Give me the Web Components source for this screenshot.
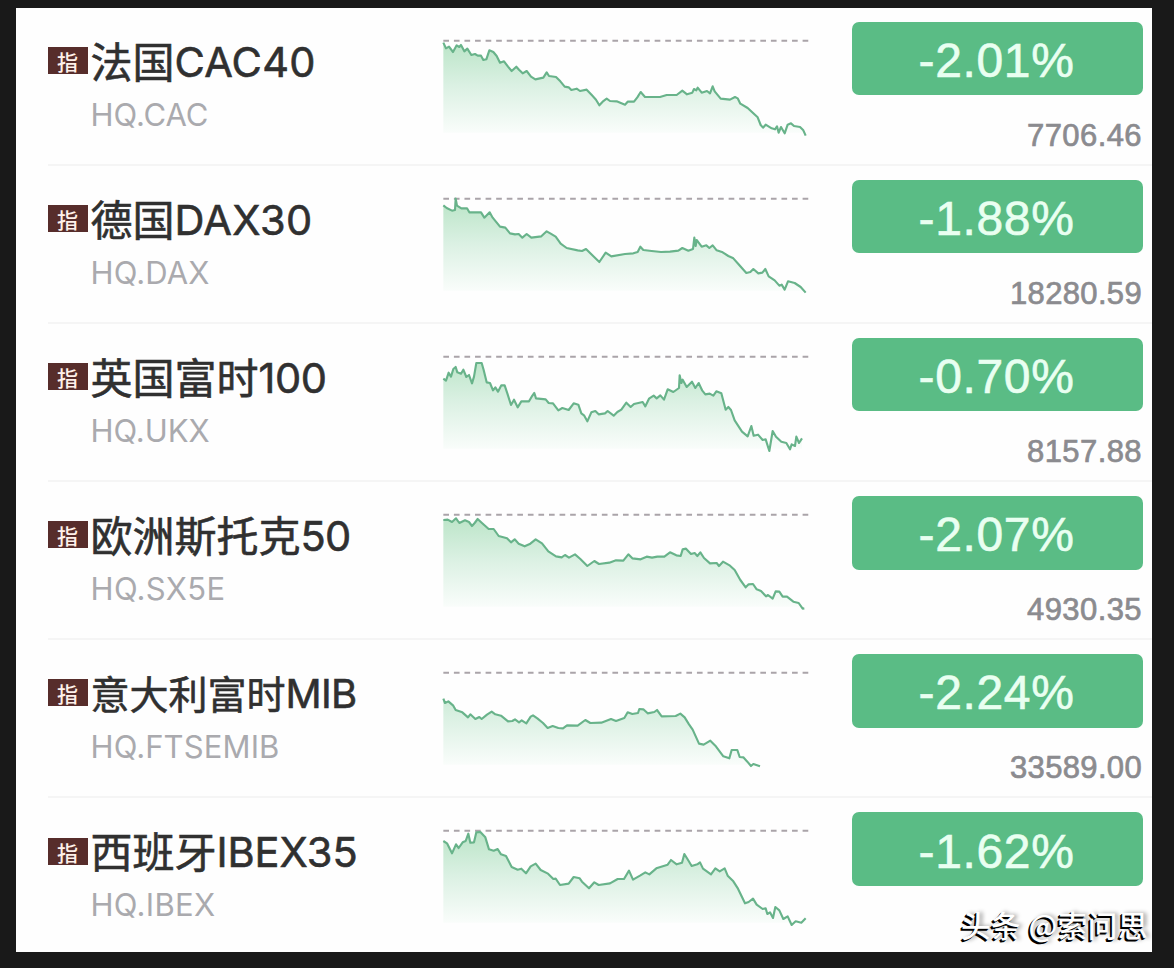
<!DOCTYPE html>
<html lang="zh-CN">
<head>
<meta charset="utf-8">
<title>欧洲指数</title>
<style>
body{margin:0;background:#191919;font-family:Inter,"Noto Sans CJK SC",sans-serif}
</style>
</head>
<body>
<quote-board></quote-board>
<script>
const quotes=[
{name:'法国',latin:'CAC40',w:141,code:'HQ.CAC',cw:118,pct:'-2.01%',val:'7706.46',
 line:'40,62 48,79 57,74 69,90 80,70 88,75 93,69 103,88 112,80 124,99 135,96 143,101 153,101 160,114 169,112 178,85 190,90 200,102 210,122 222,118 234,134 245,147 259,134 267,143 278,154 290,147 303,164 316,172 340,167 350,151 357,162 378,165 391,178 404,194 416,196 424,204 440,200 450,207 470,203 486,220 498,233 508,250 518,239 530,230 540,237 560,238 585,248 593,239 612,239 622,226 632,210 645,225 690,225 710,219 740,219 757,206 771,217 787,212 792,201 799,205 803,197 815,212 831,207 840,214 848,193 854,208 872,230 900,233 915,225 923,229 931,245 953,258 970,274 983,286 992,309 999,317 1007,308 1025,319 1035,322 1041,313 1046,332 1053,315 1064,334 1073,308 1083,304 1092,312 1110,315 1120,325 1127,341'},
{name:'德国',latin:'DAX30',w:138,code:'HQ.DAX',cw:119,pct:'-1.88%',val:'18280.59',
 line:'40,76 50,84 66,92 75,90 77,56 81,77 94,85 111,85 118,97 153,97 163,113 179,97 188,113 210,140 226,143 240,160 255,163 266,162 277,173 290,162 304,173 334,169 350,154 362,161 377,170 392,191 410,204 443,211 456,213 468,207 481,220 508,246 527,218 544,229 585,222 610,220 623,216 631,200 640,210 665,213 693,216 720,215 745,212 757,204 775,212 789,207 793,173 797,198 800,180 806,188 815,200 829,196 838,204 848,196 860,211 878,217 895,228 910,235 925,252 949,279 961,276 970,267 985,280 997,278 1006,267 1016,289 1034,301 1048,317 1055,314 1064,329 1074,304 1094,309 1112,321 1127,338'},
{name:'英国富时',latin:'100',w:68,code:'HQ.UKX',cw:119,pct:'-0.70%',val:'8157.88',
 line:'40,122 48,128 56,104 63,116 70,93 77,87 82,103 93,107 100,95 109,117 117,111 126,136 132,116 139,75 155,75 161,96 170,133 180,135 189,157 196,148 204,161 214,142 224,142 232,166 243,201 252,185 263,208 274,190 297,190 305,176 313,165 318,181 347,184 356,195 369,196 385,217 397,210 416,216 431,196 445,200 454,226 462,232 472,250 484,223 496,219 506,229 525,226 533,219 551,233 562,222 574,215 589,194 602,207 612,198 638,192 646,205 657,182 671,173 680,181 691,172 702,185 713,154 730,162 747,150 749,112 754,135 758,125 770,147 786,131 796,150 806,135 817,158 826,169 839,167 850,173 859,160 874,166 887,215 895,207 903,216 914,247 936,281 953,295 964,264 971,293 984,290 998,306 1007,304 1018,339 1028,279 1038,296 1054,311 1069,315 1080,334 1085,319 1095,324 1099,296 1107,315 1116,301'},
{name:'欧洲斯托克',latin:'50',w:50,code:'HQ.SX5E',cw:135,pct:'-2.07%',val:'4930.35',
 line:'40,72 53,71 66,78 78,67 88,81 105,73 117,78 126,90 134,81 143,69 155,80 176,99 191,99 206,120 231,127 243,139 254,130 266,143 284,151 301,143 317,130 336,142 355,166 378,181 395,184 405,177 417,185 435,175 451,189 472,210 493,195 507,204 538,200 558,193 580,194 595,175 607,187 632,190 650,182 666,185 682,182 703,182 720,169 739,178 752,180 758,160 768,158 783,174 794,171 802,180 811,169 822,186 840,202 860,201 867,210 879,197 900,209 914,222 931,252 947,274 956,265 969,264 980,280 993,285 1008,301 1014,297 1028,308 1037,286 1048,287 1058,302 1071,302 1090,317 1106,321 1118,338 1123,337'},
{name:'意大利富时',latin:'MIB',w:71,size:39,code:'HQ.FTSEMIB',cw:189,pct:'-2.24%',val:'33589.00',
 line:'40,134 45,147 55,142 69,154 77,168 97,175 114,190 121,181 136,195 148,189 155,195 171,182 185,173 196,181 213,185 234,202 247,201 255,196 267,205 275,199 289,208 302,188 309,184 322,193 339,207 353,222 368,216 385,222 399,223 411,214 443,215 466,198 481,207 514,206 543,195 558,201 583,192 593,175 607,180 624,177 628,165 640,166 653,178 673,174 681,168 695,187 737,186 751,179 764,190 777,211 788,227 807,269 821,272 841,260 856,275 880,307 898,313 905,288 922,288 929,309 940,310 952,323 963,336 970,330 990,337'},
{name:'西班牙',latin:'IBEX35',w:141,code:'HQ.IBEX',cw:125,pct:'-1.62%',val:'',
 line:'40,87 51,94 66,124 78,97 86,108 98,91 107,87 115,65 121,92 132,91 139,61 151,60 166,76 177,112 191,116 203,111 213,127 228,132 245,165 263,173 274,170 288,184 302,163 317,155 332,174 354,185 370,201 377,200 390,219 416,215 431,195 449,199 456,209 477,229 493,211 506,219 540,214 563,201 582,201 597,176 609,203 630,191 646,181 658,187 679,169 713,158 723,144 740,157 756,152 763,126 776,147 785,162 802,157 810,151 819,170 843,187 856,169 869,178 884,169 893,191 910,208 924,230 945,274 956,270 969,260 980,278 998,291 1007,289 1012,306 1020,301 1029,318 1036,285 1048,295 1060,321 1073,313 1085,339 1097,328 1114,332 1127,319'}];

const make=(tag,css,render)=>customElements.define(tag,class extends HTMLElement{
  connectedCallback(){
    if(this.shadowRoot)return;
    const root=this.attachShadow({mode:'open'});
    root.innerHTML=`<style>${css}</style>${render(this)}`;
  }
});

make('index-tag',`:host{display:block;width:40px;height:27px;background:#572d2b;color:#fff1ea;font:500 21px/28px "Noto Sans CJK SC",sans-serif;text-align:center;text-indent:-1px}`,()=>`<slot></slot>`);

/* Sets a text run to a given width through its letter spacing. */
customElements.define('fit-text',class extends HTMLElement{
  connectedCallback(){
    const root=this.attachShadow({mode:'open'});
    root.innerHTML='<style>:host{display:inline-block;white-space:nowrap}</style><span><slot></slot></span>';
    const span=root.querySelector('span'),n=this.textContent.length;
    span.style.letterSpacing=(Number(this.getAttribute('width'))-span.getBoundingClientRect().width)/n+'px';
  }
});

make('quote-name',`:host{display:block;padding-top:25px}
.top{display:flex;align-items:center;height:56px}
index-tag{margin-right:2.5px}
.name{height:56px;font:400 42px/56px Inter,"Noto Sans CJK SC",sans-serif;color:#303030;white-space:nowrap;-webkit-text-stroke:.6px #303030;display:flex}
.cjk{font-family:"Noto Sans CJK SC",sans-serif;line-height:54px}
.name fit-text{padding-top:1px;font-size:41.5px}
.code{margin:7px 0 0 42.5px;font:400 31px/38px Inter,sans-serif;color:#aaaaae}`,
el=>{const q=quotes[el.getAttribute('row')];return `<div class="top"><index-tag>指</index-tag><div class="name"><span class="cjk" style="font-size:${q.size||42}px">${q.name}</span><fit-text width="${q.w}" ${q.size?'style="font-size:40px"':''}>${q.latin}</fit-text></div></div><div class="code"><fit-text width="${q.cw}">${q.code}</fit-text></div>`});

make('spark-line',`:host{display:block;padding-top:14.2px}svg{display:block;width:390px;height:130px}`,el=>{
  const pts=quotes[el.getAttribute('row')].line,last=pts.split(' ').pop().split(',')[0];
  return `<svg viewBox="0 0 1170 390"><defs><linearGradient id="g" gradientUnits="userSpaceOnUse" x1="0" y1="55" x2="0" y2="335"><stop offset="0" stop-color="#b9e4c6"/><stop offset=".5" stop-color="#dcf1e4"/><stop offset="1" stop-color="#fafdfb"/></linearGradient><clipPath id="c"><rect x="0" y="0" width="1170" height="332"/></clipPath></defs>
<polygon clip-path="url(#c)" fill="url(#g)" points="${pts} ${last},335 40,335"/>
<path d="M40 56H1136" stroke="#aaa4a9" stroke-width="6" stroke-dasharray="17 14.7"/>
<polyline points="${pts}" fill="none" stroke="#68b38a" stroke-width="6.4" stroke-linejoin="round"/></svg>`});

make('change-badge',`:host{display:flex;align-items:center;justify-content:center;height:73.5px;border-radius:7px;background:#5abc85;color:#e9fff1;font:400 48px/74px "Liberation Sans",Arial,sans-serif;-webkit-text-stroke:.6px #e9fff1}
div{padding:5px 2px 0 0}`,()=>`<div><slot></slot></div>`);

make('quote-figures',`:host{display:block;padding-top:14.2px;box-sizing:border-box}
.value{height:36px;margin:22.5px 1px 0 0;text-align:right;font:400 31px/36px "Liberation Sans",Arial,sans-serif;color:#8b8b8f;-webkit-text-stroke:.7px #8b8b8f}`,
el=>{const q=quotes[el.getAttribute('row')];return `<change-badge><fit-text width="156">${q.pct}</fit-text></change-badge>${q.val?`<div class="value"><fit-text width="${q.val.length>7?132:115}">${q.val}</fit-text></div>`:''}`});

make('quote-row',`:host{display:grid;grid-template-columns:382px 422px 291px;height:158.1px;box-sizing:border-box;margin-left:32px;border-bottom:2px solid #f5f5f5}
:host(:last-of-type){border-color:transparent}`,
el=>{const r=el.getAttribute('row');return `<quote-name row="${r}"></quote-name><spark-line row="${r}"></spark-line><quote-figures row="${r}"></quote-figures>`});

make('source-mark',`:host{position:absolute;right:4px;bottom:7px;font:500 29.5px/42px "Noto Sans CJK SC",sans-serif;color:#fff;white-space:nowrap;text-shadow:-1px 1px 0 #000,-2px 2px 0 #000,3px 0 4px #999}`,()=>`<slot></slot>`);

make('quote-board',`:host{display:block;position:relative;box-sizing:border-box;width:1136px;height:944px;margin:8px 16px 16px;background:#fefefe;overflow:hidden}
.list{margin-top:-.4px}`,
()=>`<div class="list">${quotes.map((q,i)=>`<quote-row row="${i}"></quote-row>`).join('')}</div><source-mark><fit-text width="187">头条 @索问思</fit-text></source-mark>`);
</script>
</body>
</html>
